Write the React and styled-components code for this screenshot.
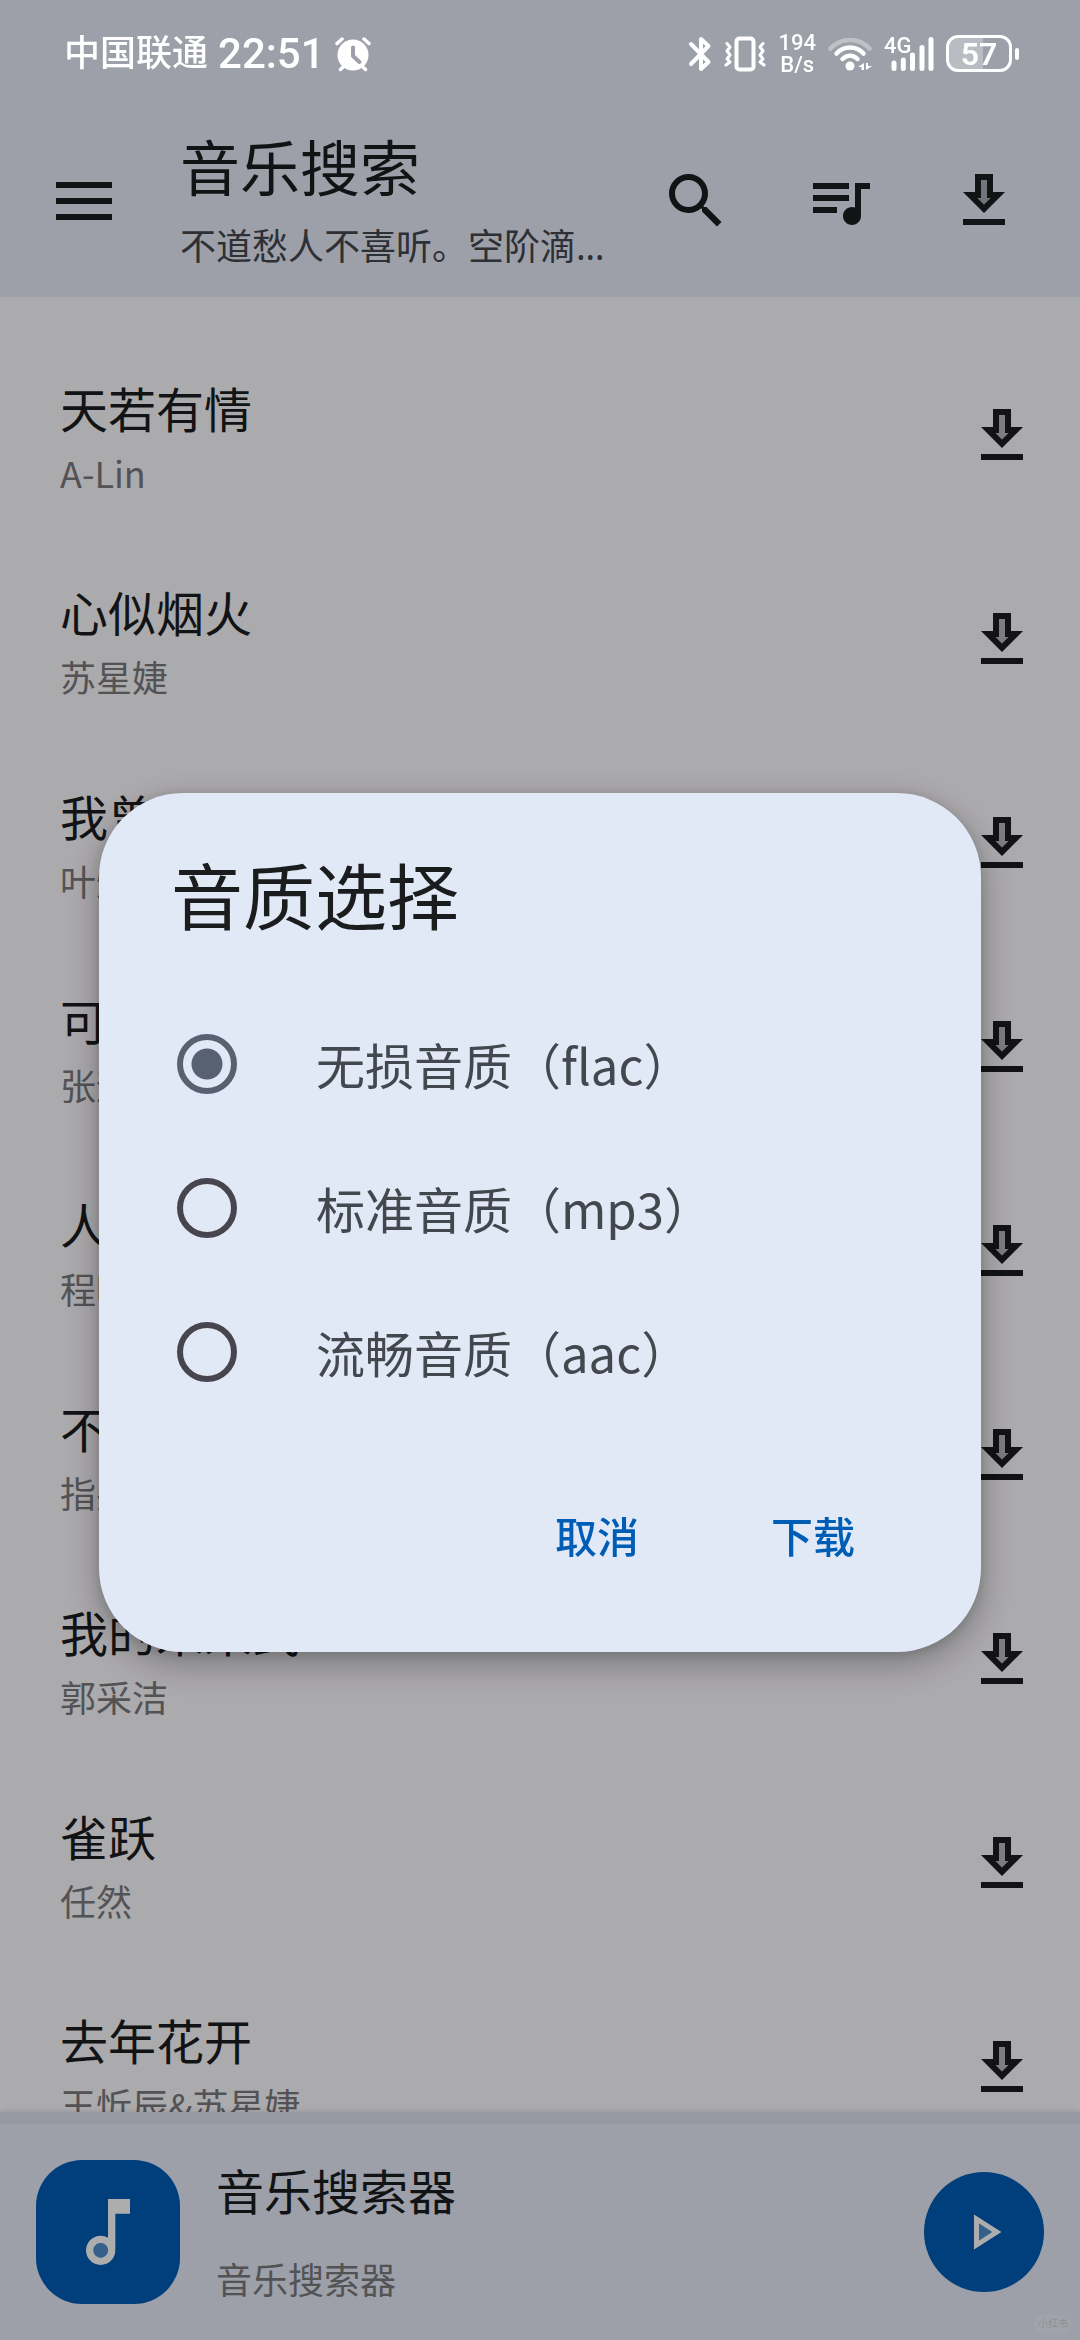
import React, { useState } from "react";
import styled, { createGlobalStyle, ThemeProvider } from "styled-components";

const light = {
    body: "#fdfbff",
    surface: "#e7ecfa",
    dialog: "#e1e9f7",
    text: "#1a1c1e",
    textVariant: "#43474e",
    textFaint: "#7b7b7e",
    primary: "#005db6",
    track: "#dde1ef",
    fontxs: "22px",
    fontsm: "36px",
    fontmd: "42px",
    fontlg: "48px",
    fontxl: "60px",
    fontxxl: "72px",
};

const GlobalStyle = createGlobalStyle`
    *, *::before, *::after {
        box-sizing: border-box;
    }

    body {
        margin: 0;
        overflow: hidden;
        font-family: Roboto, "Noto Sans CJK SC", sans-serif;
    }

    h1, h2, p, ul {
        margin: 0;
        padding: 0;
        font-weight: 400;
    }

    button {
        border: none;
        padding: 0;
        background: none;
        font-family: inherit;
        cursor: pointer;
    }

    svg {
        display: block;
        flex: none;
    }
`;

const Screen = styled.div`
    display: flex;
    flex-direction: column;
    width: 100%;
    height: 100vh;
    background-color: ${props => props.theme.body};
    color: ${props => props.theme.text};
`;

const Header = styled.header`
    flex: none;
    background-color: ${props => props.theme.surface};
`;

/* stays bright above the scrim */
const StatusBar = styled.div`
    position: relative;
    z-index: 2;
    display: flex;
    justify-content: space-between;
    align-items: center;
    height: 105px;
    padding: 2px 61px 0 64px;
    color: #fff;
`;

const StatusGroup = styled.div`
    display: flex;
    align-items: center;
    gap: ${props => props.$gap};
`;

const Carrier = styled.span`
    font-size: ${props => props.theme.fontsm};
    font-weight: 500;
    line-height: 48px;
`;

const Clock = styled.time`
    font-size: ${props => props.theme.fontmd};
    font-weight: 500;
    line-height: 48px;
`;

const Speed = styled.span`
    display: flex;
    flex-direction: column;
    align-items: center;
    font-size: ${props => props.theme.fontxs};
    font-weight: 500;
    line-height: 22px;
`;

const Signal = styled.span`
    position: relative;
    display: block;
    padding-left: 7px;
`;

const SignalType = styled.span`
    position: absolute;
    top: -2px;
    left: 0;
    font-size: ${props => props.theme.fontxs};
    font-weight: 500;
    line-height: 22px;
`;

const Battery = styled.span`
    display: flex;
    align-items: center;
    gap: 3px;
`;

const BatteryCase = styled.span`
    display: flex;
    justify-content: center;
    align-items: center;
    width: 66px;
    height: 37px;
    border: 3px solid #fff;
    border-radius: 12px;
    background: linear-gradient(to right, rgba(255, 255, 255, 0.3) 57%, transparent 57%);
    font-size: 32px;
    font-weight: 600;
    line-height: 32px;
`;

const BatteryTip = styled.span`
    width: 4px;
    height: 12px;
    border-radius: 2px;
    background-color: #fff;
`;

const Toolbar = styled.div`
    display: flex;
    align-items: center;
    height: 192px;
    padding: 0 24px 0 12px;
`;

const IconButton = styled.button`
    display: flex;
    justify-content: center;
    align-items: center;
    flex: none;
    width: 144px;
    height: 144px;
    color: inherit;
`;

const Heading = styled.div`
    flex: 1;
    min-width: 0;
    padding: 4px 8px 0 24px;
`;

const Title = styled.h1`
    font-size: ${props => props.theme.fontxl};
    line-height: 88px;
`;

const SubTitle = styled.p`
    font-family: "Noto Sans", "Noto Sans CJK SC", sans-serif;
    font-size: ${props => props.theme.fontsm};
    line-height: 64px;
    color: ${props => props.theme.textVariant};
    white-space: nowrap;
    overflow: hidden;
    text-overflow: ellipsis;
`;

const SongList = styled.ul`
    flex: 1;
    min-height: 0;
    overflow: hidden;
    padding-top: 37px;
    list-style: none;
`;

const SongRow = styled.li`
    display: flex;
    justify-content: space-between;
    align-items: center;
    height: 204px;
    padding: 0 6px 0 60px;
`;

const SongInfo = styled.div`
    padding-top: 12px;
`;

const SongTitle = styled.p`
    font-size: ${props => props.theme.fontlg};
    line-height: 60px;
`;

const SongArtist = styled.p`
    font-family: "Noto Sans CJK SC", sans-serif;
    font-size: ${props => props.theme.fontsm};
    line-height: 60px;
    color: ${props => props.theme.textFaint};
`;

const Player = styled.footer`
    position: relative;
    flex: none;
    background-color: ${props => props.theme.surface};
    box-shadow: 0 0 6px rgba(0, 0, 0, 0.15);
`;

const PlayerTrack = styled.div`
    height: 12px;
    background-color: ${props => props.theme.track};
`;

const PlayerBody = styled.div`
    display: flex;
    align-items: center;
    gap: 36px;
    height: 216px;
    padding: 0 36px;
`;

const Cover = styled.div`
    display: flex;
    justify-content: center;
    align-items: center;
    flex: none;
    width: 144px;
    height: 144px;
    border-radius: 46px;
    background-color: ${props => props.theme.primary};
    color: #fff;
`;

const PlayerInfo = styled.div`
    flex: 1;
    padding-top: 12px;
`;

const PlayerTitle = styled.p`
    font-size: ${props => props.theme.fontlg};
    line-height: 88px;
`;

const PlayerArtist = styled.p`
    font-size: ${props => props.theme.fontsm};
    line-height: 88px;
    color: ${props => props.theme.textFaint};
`;

const PlayButton = styled.button`
    display: flex;
    justify-content: center;
    align-items: center;
    flex: none;
    width: 120px;
    height: 120px;
    border-radius: 50%;
    background-color: ${props => props.theme.primary};
    color: #fff;
`;

const Badge = styled.span`
    position: absolute;
    right: 8px;
    bottom: 7px;
    width: 38px;
    border-radius: 9px;
    background-color: rgba(255, 255, 255, 0.25);
    color: rgba(0, 0, 0, 0.15);
    font-size: 10px;
    line-height: 18px;
    text-align: center;
`;

const Scrim = styled.div`
    position: fixed;
    inset: 0;
    z-index: 1;
    display: flex;
    justify-content: center;
    align-items: center;
    padding: 105px 99px 0;
    background-color: rgba(0, 0, 0, 0.32);
`;

const Dialog = styled.div`
    width: 100%;
    padding: 54px 78px;
    border-radius: 84px;
    background-color: ${props => props.theme.dialog};
    color: ${props => props.theme.text};
    box-shadow: 0 12px 36px rgba(0, 0, 0, 0.3), 0 2px 12px rgba(0, 0, 0, 0.15);
`;

const DialogTitle = styled.h2`
    margin: 0 0 39px -6px;
    font-size: ${props => props.theme.fontxxl};
    line-height: 106px;
`;

const Option = styled.label`
    display: flex;
    align-items: center;
    gap: 79px;
    height: 144px;
    font-family: "Noto Sans CJK SC", sans-serif;
    font-size: 49px;
    font-variant-ligatures: none;
    line-height: 72px;
    color: ${props => props.theme.textVariant};
    cursor: pointer;
`;

const Radio = styled.input`
    appearance: none;
    flex: none;
    width: 60px;
    height: 60px;
    margin: 0;
    border: 6px solid #47464f;
    border-radius: 50%;

    &:checked {
        border-color: #586171;
        background: radial-gradient(circle, #586171 15px, transparent 16px);
    }
`;

const Actions = styled.div`
    display: flex;
    justify-content: flex-end;
    gap: 36px;
    margin-top: 54px;
`;

const TextButton = styled.button`
    height: 120px;
    padding: 2px 48px 0;
    color: ${props => props.theme.primary};
    font-size: ${props => props.theme.fontmd};
    font-weight: 500;
    line-height: 60px;
`;

const songs = [
    { title: "天若有情", artist: "A-Lin" },
    { title: "心似烟火", artist: "苏星婕" },
    { title: "我曾", artist: "叶炫" },
    { title: "可", artist: "张远" },
    { title: "人", artist: "程响" },
    { title: "不", artist: "指尖" },
    { title: "我的未来式", artist: "郭采洁" },
    { title: "雀跃", artist: "任然" },
    { title: "去年花开", artist: "王忻辰&苏星婕" },
];

const qualities = [
    { id: "flac", label: "无损音质（flac）" },
    { id: "mp3", label: "标准音质（mp3）" },
    { id: "aac", label: "流畅音质（aac）" },
];

const Icon = ({ size = 72, children }) => (
    <svg width={size} height={size} viewBox="0 0 24 24" fill="currentColor" aria-hidden="true">
        {children}
    </svg>
);

const DownloadIcon = () => (
    <Icon>
        <path opacity=".3" d="M9.83 11 12 13.17 14.17 11H13V5h-2v6z" />
        <path d="M15 9V3H9v6H5l7 7 7-7h-4zm-3 4.17L9.83 11H11V5h2v6h1.17L12 13.17zM5 18h14v2H5z" />
    </Icon>
);

const SearchIcon = () => (
    <Icon>
        <path d="M15.5 14h-.79l-.28-.27A6.471 6.471 0 0 0 16 9.5 6.5 6.5 0 1 0 9.5 16c1.61 0 3.09-.59 4.23-1.57l.27.28v.79l5 4.99L20.49 19l-4.99-5zm-6 0C7.01 14 5 11.99 5 9.5S7.01 5 9.5 5 14 7.01 14 9.5 11.99 14 9.5 14z" />
    </Icon>
);

const QueueIcon = () => (
    <Icon>
        <path d="M15 6H3v2h12V6zm0 4H3v2h12v-2zM3 16h8v-2H3v2zM17 6v8.18c-.31-.11-.65-.18-1-.18-1.66 0-3 1.34-3 3s1.34 3 3 3 3-1.34 3-3V8h3V6h-5z" />
    </Icon>
);

const MenuIcon = () => (
    <svg width="56" height="38" viewBox="0 0 56 38" fill="currentColor" aria-hidden="true">
        <path d="M0 0h56v6H0zM0 16h56v6H0zM0 32h56v6H0z" />
    </svg>
);

const NoteIcon = () => (
    <Icon size={88}>
        <circle opacity=".3" cx="10" cy="17" r="2" />
        <path d="M12 3l.01 10.55c-.59-.34-1.27-.55-2-.55C7.79 13 6 14.79 6 17s1.79 4 4.01 4S14 19.21 14 17V7h4V3h-6zm-1.99 16c-1.1 0-2-.9-2-2s.9-2 2-2 2 .9 2 2-.9 2-2 2z" />
    </Icon>
);

const PlayIcon = () => (
    <Icon size={60}>
        <path opacity=".3" d="M10 8.64v6.72L15.27 12z" />
        <path d="M8 19l11-7L8 5v14zm2-10.36L15.27 12 10 15.36V8.64z" />
    </Icon>
);

const AlarmIcon = () => (
    <svg width="36" height="36" viewBox="0 0 36 36" fill="none" stroke="#fff" strokeLinecap="round" aria-hidden="true">
        <circle cx="18" cy="19" r="15.5" fill="#fff" stroke="none" />
        <path strokeWidth="3.5" d="M2 7.5 7 3M34 7.5 29 3M5.5 33.5 9 30M30.5 33.5 27 30" />
        <path stroke="#9da0ab" strokeWidth="4" strokeLinejoin="round" d="M18 11.5V20l6.5 6" />
    </svg>
);

const BluetoothIcon = () => (
    <svg width="24" height="36" viewBox="0 0 24 36" fill="none" stroke="#fff" strokeWidth="4" strokeLinejoin="round" strokeLinecap="round" aria-hidden="true">
        <path d="M3 8 20.5 26 13 33V3l7.500 7L3 28" />
    </svg>
);

const VibrateIcon = () => (
    <svg width="42" height="36" viewBox="0 0 42 36" fill="none" stroke="#fff" strokeWidth="3" strokeLinejoin="round" strokeLinecap="round" aria-hidden="true">
        <rect x="12.5" y="2.5" width="17" height="31" rx="3" strokeWidth="4" />
        <path d="M3 7.5 6 11 3 15l3 4-3 4 3 3-4 3M39 7.5 36 11l3 4-3 4 3 4-3 3 4 3" />
    </svg>
);

const WifiIcon = () => (
    <svg width="44" height="36" viewBox="0 0 44 36" fill="none" stroke="#fff" strokeWidth="4.5" strokeLinecap="round" aria-hidden="true">
        <path opacity=".35" d="M2.5 12.5C13 1 31 1 41.5 12.5" />
        <path d="M8.5 17.5C16 9.5 28 9.5 35.5 17.5" />
        <path d="M14.5 23C19 18.5 25 18.5 29.5 23" />
        <circle cx="22" cy="30" r="4.5" fill="#fff" stroke="none" />
        <path fill="#fff" stroke="none" d="M36 27v7h-2.500v-3H30zM38 34v-7h2v3h4z" />
    </svg>
);

const BarsIcon = () => (
    <svg width="43" height="34" viewBox="0 0 43 34" fill="none" stroke="#fff" strokeWidth="5" strokeLinecap="round" aria-hidden="true">
        <path d="M3 26v5.500M12.3 23v8.500M21.5 18v13.500M31 10.5v21M40 2.5v29" />
    </svg>
);

const QualityDialog = () => {
    const [quality, setQuality] = useState("flac");

    return (
        <Scrim>
            <Dialog role="dialog" aria-labelledby="quality-title">
                <DialogTitle id="quality-title">音质选择</DialogTitle>
                {qualities.map(({ id, label }) => (
                    <Option key={id} htmlFor={id}>
                        <Radio
                            type="radio"
                            name="quality"
                            id={id}
                            checked={quality === id}
                            onChange={() => setQuality(id)}
                        />
                        {label}
                    </Option>
                ))}
                <Actions>
                    <TextButton type="button">取消</TextButton>
                    <TextButton type="button">下载</TextButton>
                </Actions>
            </Dialog>
        </Scrim>
    );
}

const App = () => {
    return (
        <ThemeProvider theme={light}>
            <GlobalStyle />
            <Screen>
                <Header>
                    <StatusBar>
                        <StatusGroup $gap="10px">
                            <Carrier>中国联通</Carrier>
                            <Clock>22:51</Clock>
                            <AlarmIcon />
                        </StatusGroup>
                        <StatusGroup $gap="12px">
                            <BluetoothIcon />
                            <VibrateIcon />
                            <Speed>
                                <span>194</span>
                                <span>B/s</span>
                            </Speed>
                            <WifiIcon />
                            <Signal>
                                <SignalType>4G</SignalType>
                                <BarsIcon />
                            </Signal>
                            <Battery>
                                <BatteryCase>57</BatteryCase>
                                <BatteryTip />
                            </Battery>
                        </StatusGroup>
                    </StatusBar>
                    <Toolbar>
                        <IconButton type="button" aria-label="菜单"><MenuIcon /></IconButton>
                        <Heading>
                            <Title>音乐搜索</Title>
                            <SubTitle>不道愁人不喜听。空阶滴到明。</SubTitle>
                        </Heading>
                        <IconButton type="button" aria-label="搜索"><SearchIcon /></IconButton>
                        <IconButton type="button" aria-label="播放列表"><QueueIcon /></IconButton>
                        <IconButton type="button" aria-label="下载管理"><DownloadIcon /></IconButton>
                    </Toolbar>
                </Header>
                <SongList>
                    {songs.map(({ title, artist }) => (
                        <SongRow key={title}>
                            <SongInfo>
                                <SongTitle>{title}</SongTitle>
                                <SongArtist>{artist}</SongArtist>
                            </SongInfo>
                            <IconButton type="button" aria-label={`下载 ${title}`}><DownloadIcon /></IconButton>
                        </SongRow>
                    ))}
                </SongList>
                <Player>
                    <PlayerTrack />
                    <PlayerBody>
                        <Cover><NoteIcon /></Cover>
                        <PlayerInfo>
                            <PlayerTitle>音乐搜索器</PlayerTitle>
                            <PlayerArtist>音乐搜索器</PlayerArtist>
                        </PlayerInfo>
                        <PlayButton type="button" aria-label="播放"><PlayIcon /></PlayButton>
                    </PlayerBody>
                    <Badge>小红书</Badge>
                </Player>
            </Screen>
            <QualityDialog />
        </ThemeProvider>
    );
}

export default App;
